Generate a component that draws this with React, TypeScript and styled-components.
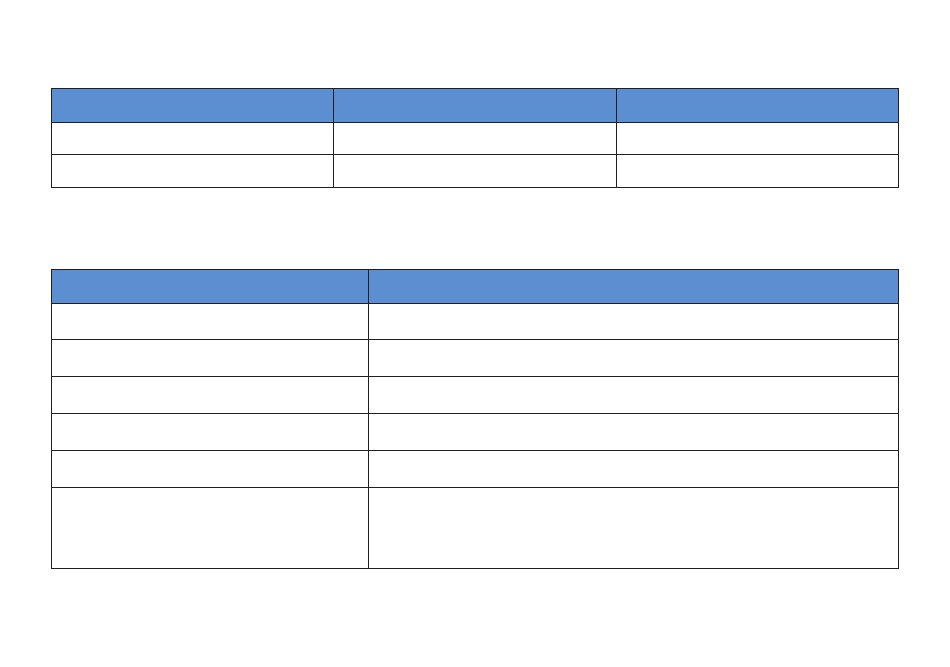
import React from "react";
import styled, { createGlobalStyle } from "styled-components";

const GlobalStyle = createGlobalStyle`
  html, body {
    margin: 0;
    padding: 0;
    background: #ffffff;
    font-family: "Liberation Sans", Arial, sans-serif;
  }
`;

const Page = styled.div`
  width: 950px;
  height: 667px;
  box-sizing: border-box;
  padding: 88px 0 0 51px;
  display: flex;
  flex-direction: column;
  gap: 81px;
  background: #ffffff;
`;

const Grid = styled.div<{ $cols: string; $rows: string }>`
  display: grid;
  width: 848px;
  box-sizing: border-box;
  grid-template-columns: ${(p) => p.$cols};
  grid-template-rows: ${(p) => p.$rows};
  gap: 1px;
  padding: 1px;
  background: #231f20;
`;

const Cell = styled.div<{ $head?: boolean }>`
  background: ${(p) => (p.$head ? "#5b8fd1" : "#ffffff")};
  color: ${(p) => (p.$head ? "#ffffff" : "#231f20")};
  font-size: 13px;
`;

const tableOneRows = 2;
const tableTwoRows = 6;

export default function App() {
  return (
    <>
      <GlobalStyle />
      <Page>
        <Grid role="table" $cols="281px 282px 281px" $rows="33px 31px 32px">
          {[0, 1, 2].map((i) => (
            <Cell key={`h1-${i}`} role="columnheader" $head />
          ))}
          {Array.from({ length: tableOneRows * 3 }).map((_, i) => (
            <Cell key={`c1-${i}`} role="cell" />
          ))}
        </Grid>
        <Grid
          role="table"
          $cols="316px 529px"
          $rows="33px 35px 36px 36px 36px 36px 80px"
        >
          {[0, 1].map((i) => (
            <Cell key={`h2-${i}`} role="columnheader" $head />
          ))}
          {Array.from({ length: tableTwoRows * 2 }).map((_, i) => (
            <Cell key={`c2-${i}`} role="cell" />
          ))}
        </Grid>
      </Page>
    </>
  );
}
